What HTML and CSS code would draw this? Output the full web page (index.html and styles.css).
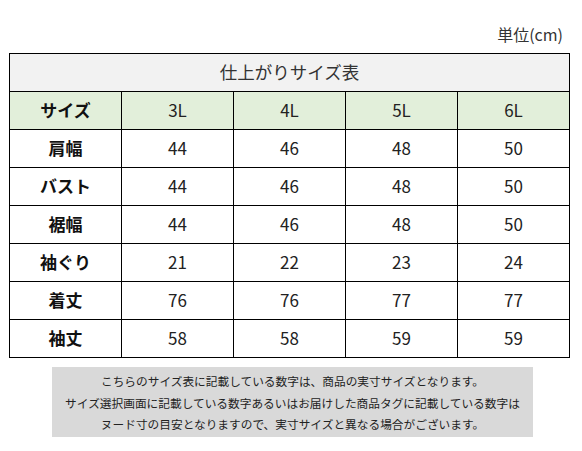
FILE: index.html
```html
<!DOCTYPE html>
<html lang="ja">
<head>
<meta charset="utf-8">
<link rel="stylesheet" href="styles.css">
</head>
<body>
<div class="page">
  <div class="unit">単位(cm)</div>
  <table class="size-table">
    <tr class="title-row"><td colspan="5">仕上がりサイズ表</td></tr>
    <tr class="head-row"><th>サイズ</th><td>3L</td><td>4L</td><td>5L</td><td>6L</td></tr>
    <tr><th>肩幅</th><td>44</td><td>46</td><td>48</td><td>50</td></tr>
    <tr><th>バスト</th><td>44</td><td>46</td><td>48</td><td>50</td></tr>
    <tr><th>裾幅</th><td>44</td><td>46</td><td>48</td><td>50</td></tr>
    <tr><th>袖ぐり</th><td>21</td><td>22</td><td>23</td><td>24</td></tr>
    <tr><th>着丈</th><td>76</td><td>76</td><td>77</td><td>77</td></tr>
    <tr><th>袖丈</th><td>58</td><td>58</td><td>59</td><td>59</td></tr>
  </table>
  <div class="note">
    <p>こちらのサイズ表に記載している数字は、商品の実寸サイズとなります。</p>
    <p>サイズ選択画面に記載している数字あるいはお届けした商品タグに記載している数字は</p>
    <p>ヌード寸の目安となりますので、実寸サイズと異なる場合がございます。</p>
  </div>
</div>
</body>
</html>
```

FILE: styles.css
```css
html, body {
  margin: 0;
  padding: 0;
  background: #fff;
}
body {
  font-family: "Noto Sans CJK JP", "Noto Sans", sans-serif;
  color: #222;
}
.page {
  width: 582px;
  padding: 23px 0 0 9px;
  box-sizing: border-box;
}
.unit {
  text-align: right;
  font-size: 16px;
  line-height: 22px;
  padding-right: 19px;
  height: 30px;
  color: #333;
}
.size-table {
  border-collapse: collapse;
  width: 561px;
  table-layout: fixed;
}
.size-table td,
.size-table th {
  border: 1px solid #000;
  height: 35px;
  padding: 0 0 2px;
  text-align: center;
  vertical-align: middle;
  font-size: 17px;
  font-weight: normal;
  line-height: 20px;
  color: #222;
}
.size-table th {
  font-weight: bold;
  color: #111;
}
.title-row td {
  background: #f2f2f2;
  font-size: 17.5px;
  color: #333;
}
.head-row th,
.head-row td {
  background: #e2efda;
}
.note {
  width: 481px;
  margin: 9px 0 0 43px;
  background: #d9d9d9;
  padding: 3px 0 2px;
  text-align: center;
  font-size: 11.7px;
  color: #222;
}
.note p {
  margin: 0;
  line-height: 21.7px;
}
```
